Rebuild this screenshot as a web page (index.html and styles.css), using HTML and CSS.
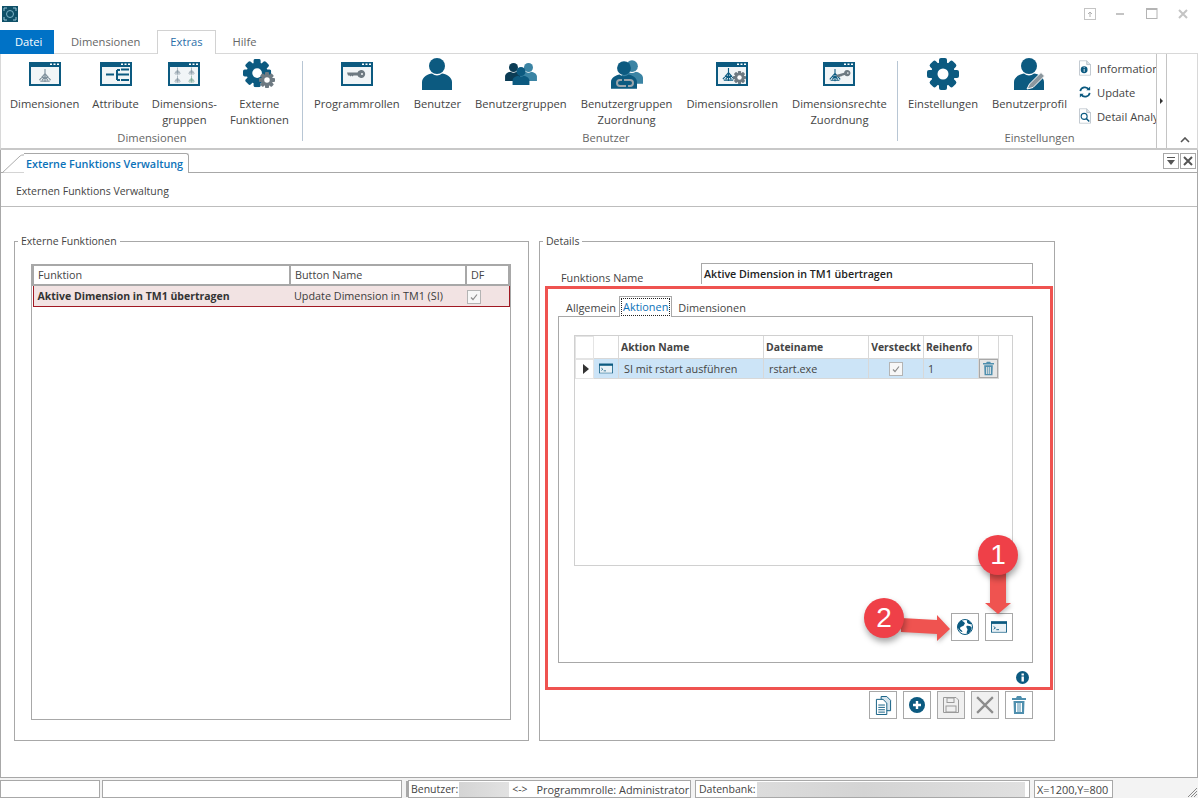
FILE: index.html
```html
<!DOCTYPE html>
<html lang="de">
<head>
  <meta charset="UTF-8">
  <title>Externe Funktions Verwaltung</title>
  <link rel="stylesheet" href="styles.css">
</head>
<body>
<svg class="sprite" xmlns="http://www.w3.org/2000/svg">
  <symbol id="frame" viewBox="0 0 32 24">
    <rect width="32" height="24" fill="#0c5a80"/>
    <rect x="2" y="5" width="28" height="17" fill="#f1f5f7"/>
    <path d="M21 1.5h2V3h-2zM24.5 1.5h2V3h-2zM28 1.5h2V3h-2z" fill="#fff"/>
  </symbol>
  <symbol id="gear" viewBox="0 0 32 32">
    <g fill="currentColor">
      <rect x="12" y="0" width="8" height="32" rx="2"/>
      <rect x="12" y="0" width="8" height="32" rx="2" transform="rotate(45 16 16)"/>
      <rect x="12" y="0" width="8" height="32" rx="2" transform="rotate(90 16 16)"/>
      <rect x="12" y="0" width="8" height="32" rx="2" transform="rotate(135 16 16)"/>
      <circle cx="16" cy="16" r="12"/>
    </g>
    <circle cx="16" cy="16" r="5.5" fill="#fff"/>
  </symbol>
  <symbol id="person" viewBox="0 0 30 32">
    <circle cx="15" cy="8" r="8" fill="currentColor"/>
    <path d="M0 32V24C0 19 6 16 10 15.5 13 18 17 18 20 15.5 24 16 30 19 30 24V32Z" fill="currentColor"/>
  </symbol>
  <symbol id="tower" viewBox="0 0 14 16">
    <path d="M7 1V15M7 6L1 13M7 6L13 13M3 10H11M2 14H12M4 13L7 9L10 13" fill="none" stroke="currentColor" stroke-width="1.2"/>
  </symbol>
  <symbol id="key" viewBox="0 0 20 8">
    <path fill-rule="evenodd" d="M0 2.5H10.5A4 4 0 1 1 10.5 5.5H6.5L5.5 6.5 4.5 5.5 3.5 6.5 2.5 5.5H1ZM15 3A1 1 0 1 0 15 5 1 1 0 1 0 15 3Z" fill="currentColor"/>
  </symbol>
  <symbol id="terminal" viewBox="0 0 18 13">
    <rect x=".5" y=".5" width="17" height="12" fill="#e9f1f6" stroke="#0c5a80"/>
    <rect width="18" height="3" fill="#0c5a80"/>
    <path d="M3 6l2 1.5L3 9M6 9.5h3" fill="none" stroke="#0c5a80"/>
  </symbol>
  <symbol id="trash" viewBox="0 0 14 18">
    <path d="M5 0h4l1 2h4v2H0V2h4zM1.5 5h11L12 18H2zM4 7v9h1.500V7zM6.500 7v9h1V7zM8.500 7v9H10V7z" fill-rule="evenodd" fill="currentColor"/>
  </symbol>
  <symbol id="page" viewBox="0 0 14 18">
    <path d="M.5.5H9L13.500 5v12.500H.5z" fill="#fff" stroke="#b4bec6"/>
    <path d="M9 .5V5h4.500" fill="#dfe5e9" stroke="#b4bec6"/>
  </symbol>
</svg>

<div class="app">
  <header class="titlebar">
    <svg class="app-logo" viewBox="0 0 16 16">
      <rect width="16" height="16" fill="#0f5068"/>
      <circle cx="8" cy="8" r="3.5" fill="none" stroke="#7fb4c8"/>
      <path d="M2 5V2H5M11 2H14V5M14 11V14H11M5 14H2V11" fill="none" stroke="#9cc6d6"/>
    </svg>
    <div class="win-buttons">
      <svg class="win-btn" viewBox="0 0 12 12"><rect x=".5" y=".5" width="11" height="11" fill="none" stroke="#c4c4c4"/><path d="M6 9V4M4 6l2-2 2 2" fill="none" stroke="#b0b0b0"/></svg>
      <svg class="win-btn" viewBox="0 0 12 12"><rect x="1" y="5" width="8" height="2" fill="#c4c4c4"/></svg>
      <svg class="win-btn" viewBox="0 0 12 12"><rect x=".5" y=".5" width="10.5" height="10" fill="none" stroke="#b4b4b4"/><rect width="11" height="2" fill="#b4b4b4"/></svg>
      <svg class="win-btn" viewBox="0 0 12 12"><path d="M2 2l8 8M10 2l-8 8" stroke="#c4c4c4" stroke-width="2"/></svg>
    </div>
  </header>

  <nav class="ribbon-tabs">
    <a class="rtab rtab-file">Datei</a>
    <a class="rtab">Dimensionen</a>
    <a class="rtab active">Extras</a>
    <a class="rtab">Hilfe</a>
  </nav>

  <section class="ribbon">
    <div class="rgroup rgroup-dim">
      <div class="ritems">
        <div class="ritem"><svg class="ico" viewBox="0 0 32 32"><use href="#frame" width="32" height="24" y="4"/><use href="#tower" x="9" y="10" width="14" height="15" color="#7f909c"/></svg><span>Dimensionen</span></div>
        <div class="ritem"><svg class="ico" viewBox="0 0 32 32"><use href="#frame" width="32" height="24" y="4"/><path d="M6 16.5H14M17 12V22M17 16.5H29M17 12H20M17 22H20M21 11.5H29M21 22H29" fill="none" stroke="#0c5a80" stroke-width="2"/></svg><span>Attribute</span></div>
        <div class="ritem"><svg class="ico" viewBox="0 0 32 32"><use href="#frame" width="32" height="24" y="4"/><use href="#tower" x="4" y="9" width="11" height="8" color="#7d8e9a"/><use href="#tower" x="18" y="9" width="11" height="8" color="#7d8e9a"/><use href="#tower" x="4" y="17" width="11" height="8" color="#7d8e9a"/><use href="#tower" x="18" y="17" width="11" height="8" color="#6fa08c"/></svg><span>Dimensions-<br>gruppen</span></div>
        <div class="ritem"><svg class="ico" viewBox="0 0 34 32"><use href="#gear" width="30" height="30" color="#0c5a80"/><use href="#gear" x="17" y="14" width="17" height="17" color="#6e7a82"/></svg><span>Externe<br>Funktionen</span></div>
      </div>
      <div class="rgroup-title">Dimensionen</div>
    </div>

    <div class="rgroup rgroup-user">
      <div class="ritems">
        <div class="ritem"><svg class="ico" viewBox="0 0 32 32"><use href="#frame" width="32" height="24" y="4"/><use href="#key" x="6" y="12" width="20" height="8" color="#6e7a82"/></svg><span>Programmrollen</span></div>
        <div class="ritem"><svg class="ico" viewBox="0 0 30 32"><use href="#person" width="30" height="32" color="#0c5a80"/></svg><span>Benutzer</span></div>
        <div class="ritem"><svg class="ico" viewBox="0 0 32 32"><use href="#person" y="5" width="17" height="18" color="#0b3c55"/><use href="#person" x="15" y="5" width="17" height="18" color="#3b84a4"/><use href="#person" x="6" y="9" width="20" height="18" color="#0c5a80"/></svg><span>Benutzergruppen</span></div>
        <div class="ritem"><svg class="ico" viewBox="0 0 32 32"><use href="#person" x="10" width="22" height="28" color="#3b84a4"/><use href="#person" y="3" width="26" height="28" color="#0c5a80"/><path d="M13 22h6a3 3 0 0 1 0 6h-2M15 28H9a3 3 0 0 1 0-6h2" fill="none" stroke="#9aa5ac" stroke-width="2"/></svg><span>Benutzergruppen<br>Zuordnung</span></div>
        <div class="ritem"><svg class="ico" viewBox="0 0 32 32"><use href="#frame" width="32" height="24" y="4"/><use href="#tower" x="5" y="9" width="15" height="15" color="#0c5a80"/><use href="#gear" x="17" y="13" width="13" height="13" color="#6e7a82"/></svg><span>Dimensionsrollen</span></div>
        <div class="ritem"><svg class="ico" viewBox="0 0 32 32"><use href="#frame" width="32" height="24" y="4"/><use href="#tower" x="5" y="10" width="14" height="14" color="#0c5a80"/><use href="#key" x="13" y="12" width="16" height="8" color="#6e7a82" transform="rotate(-15 21 16)"/></svg><span>Dimensionsrechte<br>Zuordnung</span></div>
      </div>
      <div class="rgroup-title">Benutzer</div>
    </div>

    <div class="rgroup rgroup-set">
      <div class="ritems">
        <div class="ritem"><svg class="ico" viewBox="0 0 32 32"><use href="#gear" width="32" height="32" color="#0c5a80"/></svg><span>Einstellungen</span></div>
        <div class="ritem"><svg class="ico" viewBox="0 0 32 32"><use href="#person" width="30" height="32" color="#0c5a80"/><path d="M13 31L15.5 26 27 14.500 30.500 18 19 29.500Z" fill="#8c979e" stroke="#fff"/></svg><span>Benutzerprofil</span></div>
        <ul class="rsmall">
          <li><svg class="ico-sm" viewBox="0 0 14 18"><use href="#page" width="14" height="18"/><circle cx="6" cy="11" r="4" fill="#0c5a80"/><rect x="5.5" y="10" width="1" height="3.5" fill="#fff"/><rect x="5.5" y="8" width="1" height="1" fill="#fff"/></svg>Information</li>
          <li><svg class="ico-sm" viewBox="0 0 14 18"><path d="M1.5 8a5.500 5.500 0 0 1 10-2M12.500 10a5.500 5.500 0 0 1-10 2" fill="none" stroke="#0c5a80" stroke-width="2"/><path d="M13 2.500V7H8.500zM1 15.500V11h4.500z" fill="#0c5a80"/></svg>Update</li>
          <li><svg class="ico-sm" viewBox="0 0 14 18"><use href="#page" width="14" height="18"/><circle cx="6" cy="9.500" r="3.500" fill="#fff" stroke="#0c5a80" stroke-width="1.300"/><path d="M8.500 12l3.500 3.500" stroke="#0c5a80" stroke-width="1.800"/></svg>Detail Analyse</li>
        </ul>
      </div>
      <div class="rgroup-title">Einstellungen</div>
    </div>

    <div class="rscroll"><i class="tri-right"></i></div>
    <div class="rcollapse"><svg viewBox="0 0 10 6" width="10" height="6"><path d="M1 5l4-4 4 4" fill="none" stroke="#555" stroke-width="1.600"/></svg></div>
  </section>

  <main class="doc">
    <div class="doc-tabs">
      <svg class="doc-tab-slant" viewBox="0 0 22 19" width="21" height="19"><path d="M0 19L18 1.500Q19 .5 22 .5V19Z" fill="#fff"/><path d="M0 18.500L18 1.500Q19 .5 22 .5" fill="none" stroke="#a8a8a8"/></svg>
      <div class="doc-tab">Externe Funktions Verwaltung</div>
      <div class="doc-btns">
        <span class="doc-btn"><svg viewBox="0 0 10 8" width="10" height="8"><path d="M1 .5h8" stroke="#555"/><path d="M1 3h8L5 8z" fill="#555"/></svg></span>
        <span class="doc-btn"><svg viewBox="0 0 10 10" width="10" height="10"><path d="M1 1l8 8M9 1l-8 8" stroke="#555" stroke-width="2"/></svg></span>
      </div>
    </div>
    <div class="doc-head">Externen Funktions Verwaltung</div>

    <div class="doc-body">
      <fieldset class="group group-left">
        <legend>Externe Funktionen</legend>
        <div class="fn-list">
          <table class="fn-table">
            <colgroup><col class="c-fn"><col class="c-btn"><col class="c-df"></colgroup>
            <thead><tr><th>Funktion</th><th>Button Name</th><th>DF</th></tr></thead>
            <tbody>
              <tr class="sel">
                <td><b>Aktive Dimension in TM1 übertragen</b></td>
                <td>Update Dimension in TM1 (SI)</td>
                <td><span class="check"><svg viewBox="0 0 12 12" width="12" height="12"><path d="M3 6.500l2 2 4-5" fill="none" stroke="#8c8c8c" stroke-width="1.200"/></svg></span></td>
              </tr>
            </tbody>
          </table>
        </div>
      </fieldset>

      <fieldset class="group group-right">
        <legend>Details</legend>
        <div class="name-row">
          <label>Funktions Name</label>
          <div class="name-input">Aktive Dimension in TM1 übertragen</div>
        </div>
        <div class="tabs">
          <span class="tab">Allgemein</span>
          <span class="tab active"><em>Aktionen</em></span>
          <span class="tab">Dimensionen</span>
        </div>
        <div class="tab-panel">
          <div class="act-grid">
            <div class="act-row act-header">
              <div class="cell c-arrow"></div>
              <div class="cell c-icon"></div>
              <div class="cell c-name">Aktion Name</div>
              <div class="cell c-file">Dateiname</div>
              <div class="cell c-hidden">Versteckt</div>
              <div class="cell c-order">Reihenfo</div>
              <div class="cell c-del"></div>
            </div>
            <div class="act-row act-sel">
              <div class="cell c-arrow"><i class="tri-right tri-big"></i></div>
              <div class="cell c-icon"><svg viewBox="0 0 18 13" width="14" height="11"><use href="#terminal" width="18" height="13"/></svg></div>
              <div class="cell c-name">SI mit rstart ausführen</div>
              <div class="cell c-file">rstart.exe</div>
              <div class="cell c-hidden"><span class="check"><svg viewBox="0 0 12 12" width="12" height="12"><path d="M3 6.500l2 2 4-5" fill="none" stroke="#8c8c8c" stroke-width="1.200"/></svg></span></div>
              <div class="cell c-order">1</div>
              <div class="cell c-del"><span class="del-btn"><svg viewBox="0 0 14 18" width="11" height="15"><use href="#trash" width="14" height="18" color="#4f8fae"/></svg></span></div>
            </div>
          </div>
          <div class="panel-btns">
            <span class="btn"><svg viewBox="0 0 16 16" width="16" height="16"><circle cx="8" cy="8" r="7.500" fill="#fff" stroke="#0c5a80"/><path d="M4 1.500C6 2 7.500 3 8 4.500 7 5 7.500 6.500 6 7 4.500 7.500 3 8 3 9.500 3.500 11 5 11 5.500 13 4 13 1.500 11 .5 8 .5 5 2 3 4 1.500ZM9.500 7C11 6.500 13 7 14.500 8 15 10.500 13 14 10 15 9 13 10.500 12 10.500 10.500 10 9 9 8.500 9.500 7ZM10 1C12 1.500 13.500 3 14.500 5 13 5.500 11 5 10 3.500Z" fill="#0c5a80"/></svg></span>
            <span class="btn"><svg viewBox="0 0 18 13" width="16" height="12"><use href="#terminal" width="18" height="13"/></svg></span>
          </div>
        </div>
        <div class="info-row"><svg viewBox="0 0 13 13" width="13" height="13"><circle cx="6.500" cy="6.500" r="6.500" fill="#0c5a80"/><rect x="5.500" y="5.500" width="2.400" height="5" fill="#fff"/><rect x="5.500" y="2.500" width="2.400" height="2" fill="#fff"/></svg></div>
        <div class="form-btns">
          <span class="btn"><svg viewBox="0 0 18 20" width="17" height="19"><path d="M6.500 .5h6l4 4v11h-10z" fill="#d8e6ee" stroke="#0c5a80"/><path d="M1.500 3.500h7l4 4v12h-11z" fill="#fff" stroke="#0c5a80"/><path d="M3.500 9.500h7M3.500 12h7M3.500 14.500h7M3.500 17h7" stroke="#0c5a80"/></svg></span>
          <span class="btn"><svg viewBox="0 0 16 16" width="16" height="16"><circle cx="8" cy="8" r="8" fill="#0c5a80"/><path d="M8 4v8M4 8h8" stroke="#fff" stroke-width="2.400"/></svg></span>
          <span class="btn btn-off"><svg viewBox="0 0 16 16" width="16" height="16"><path d="M.5.5H13l2.500 2.500v12.500H.5z" fill="none" stroke="#9a9a9a"/><rect x="4" y="1" width="7" height="4.500" fill="none" stroke="#9a9a9a"/><rect x="3" y="9" width="10" height="6" fill="none" stroke="#9a9a9a"/></svg></span>
          <span class="btn btn-off"><svg viewBox="0 0 16 16" width="18" height="18"><path d="M1 1l14 14M15 1L1 15" stroke="#8c8c8c" stroke-width="2"/></svg></span>
          <span class="btn"><svg viewBox="0 0 14 18" width="14" height="18"><use href="#trash" width="14" height="18" color="#4f8fae"/></svg></span>
        </div>
      </fieldset>
    </div>
  </main>

  <footer class="statusbar">
    <div class="sb sb-a"></div>
    <div class="sb sb-b"></div>
    <div class="sb sb-user">Benutzer:<span class="blur blur-user"></span><span class="sb-link">&lt;-&gt;</span><span class="sb-role">Programmrolle: Administrator</span></div>
    <div class="sb sb-db">Datenbank:<span class="blur blur-db"></span></div>
    <div class="sb sb-xy">X=1200,Y=800</div>
    <svg class="grip" viewBox="0 0 10 10" width="10" height="10"><path d="M10 1L1 10M10 4L4 10M10 7L7 10" stroke="#888"/></svg>
  </footer>

  <!-- markup drawn on top of the screenshot -->
  <div class="mark-box"></div>
  <svg class="mark-arrow arrow-1" viewBox="0 0 26 45" width="26" height="45"><path d="M5 0H21V34H26L13 45 0 34H5Z" fill="#ef5350"/></svg>
  <svg class="mark-arrow arrow-2" viewBox="0 0 50 26" width="50" height="26"><path d="M0 3L36 5V0L49 14 36 26V19L0 17Z" fill="#ef5350"/></svg>
  <div class="badge badge-1">1</div>
  <div class="badge badge-2">2</div>
</div>
</body>
</html>
```
FILE: styles.css
```css
* { box-sizing:border-box; }
html, body { margin:0; padding:0; }
body { font-family:"Open Sans", "Noto Sans", sans-serif; font-size:11px; color:#3c3c3c; background:#fff; }
.sprite { position:absolute; width:0; height:0; }
.app { position:relative; width:1198px; height:798px; display:flex; flex-direction:column; overflow:hidden; background:#fff; }

/* Title bar */
.titlebar { height:30px; flex:none; display:flex; align-items:center; justify-content:space-between; padding:0 0 0 2px; }
.app-logo { width:16px; height:16px; margin-top:-2px; }
.win-buttons { display:flex; align-items:center; gap:19px; padding-right:9px; margin-top:-2px; }
.win-btn { width:12px; height:12px; }

/* Ribbon */
.ribbon-tabs { height:24px; flex:none; display:flex; align-items:stretch; position:relative; z-index:1; }
.rtab { padding:2px 16px 0; font-size:11.2px; color:#666; border:1px solid transparent; border-bottom:none; line-height:18px; }
.rtab-file { background:#0072c6; color:#fff; padding:2px 14px 0; width:54px; }
.rtab.active { background:#fff; border-color:#d2d2d2; color:#2a6ea8; padding:2px 12px 0; }
.ribbon { height:97px; flex:none; margin-top:-1px; display:flex; border:1px solid #d8d8d8; border-bottom:2px solid #c8c8c8; position:relative; }
.rgroup { display:flex; flex-direction:column; height:100%; position:relative; }
.rgroup-dim { width:302px; padding:0 9px; }
.rgroup-dim .ritems { gap:13px; }
.rgroup-user { width:595px; padding-left:11px; }
.rgroup-set { width:259px; padding-left:10px; }
.rgroup-dim::after, .rgroup-user::after { content:''; position:absolute; right:0; top:7px; height:80px; width:1px; background:#b8c6d4; }
.ritems { display:flex; gap:14px; height:80px; }
.ritem { display:flex; flex-direction:column; align-items:center; text-align:center; font-size:11.2px; line-height:16px; color:#444; padding-top:4px; white-space:nowrap; }
.ritem span { margin-top:6px; }
.ico { height:32px; width:32px; flex:none; }
.rgroup-title { text-align:center; font-size:11.2px; color:#666; line-height:16px; margin-top:-4px; }
.rgroup-set .rgroup-title { padding-left:14px; }
.rsmall { list-style:none; margin:0 0 0 -2px; padding:2px 0 0; width:77px; overflow:hidden; white-space:nowrap; }
.rsmall li { height:24px; display:flex; align-items:center; gap:6px; font-size:11.2px; color:#444; }
.ico-sm { width:12px; height:16px; flex:none; }
.rscroll { position:absolute; left:1155px; top:0; bottom:0; width:11px; background:#fff; border:1px solid #c4c4c4; border-top:none; border-bottom:none; display:flex; align-items:center; justify-content:center; }
.tri-right { display:block; width:0; height:0; border-left:3px solid #333; border-top:3px solid transparent; border-bottom:3px solid transparent; }
.tri-big { border-left-width:6px; border-top-width:5px; border-bottom-width:5px; }
.rcollapse { position:absolute; right:7px; bottom:2px; }

/* Document area */
.doc { flex:1; display:flex; flex-direction:column; border:1px solid #a8a8a8; border-top:none; min-height:0; }
.doc-tabs { height:23px; flex:none; display:flex; align-items:flex-end; border-bottom:1px solid #a8a8a8; position:relative; padding-left:2px; }
.doc-tab-slant { display:block; margin-bottom:-1px; }
.doc-tab { height:20px; margin-bottom:-1px; background:#fff; border:1px solid #a8a8a8; border-left:none; border-bottom:none; border-radius:0 3px 0 0; padding:1px 5px 0 2px; font-size:10.8px; font-weight:600; color:#0b72b9; line-height:18px; white-space:nowrap; }
.doc-btns { margin-left:auto; display:flex; gap:1px; padding-right:1px; align-self:center; }
.doc-btn { width:16px; height:16px; border:1px solid #a8a8a8; display:flex; align-items:center; justify-content:center; }
.doc-head { height:34px; flex:none; padding:10px 0 0 15px; line-height:16px; border-bottom:1px solid #bdbdbd; font-size:10.5px; color:#444; }
.doc-body { flex:1; display:flex; gap:10px; padding:26px 0 0 13px; }

.group { margin:0; border:1px solid #a8a8a8; padding:0; height:508px; min-width:0; display:flex; flex-direction:column; }
.group legend { padding:0 3px; font-size:10.5px; line-height:16px; color:#444; }
.group-left { width:515px; padding:15px 17px 20px 16px; }
.group-left legend { margin-left:-13px; }
.group-right { width:516px; padding:14px 21px 0 18px; }
.group-right legend { margin-left:-15px; }
.fn-list { height:456px; border:1px solid #a8a8a8; border-top:none; }
.fn-table { width:100%; border-collapse:collapse; table-layout:fixed; font-size:10.8px; }
.c-fn { width:257px; }
.c-btn { width:176px; }
.fn-table th { height:20px; padding:0 4px 2px; text-align:left; font-weight:400; border:2px solid #a8a8a8; color:#444; }
.fn-table td { height:21px; padding:0 4px; background:#f2e3e3; border-top:1px solid #a01822; border-bottom:1px solid #a01822; white-space:nowrap; }
.fn-table td:first-child { border-left:1px solid #a01822; }
.fn-table td:last-child { border-right:1px solid #a01822; padding-left:1px; }
.fn-table b { font-weight:700; font-size:10.5px; color:#333; }
.check { display:inline-flex; width:14px; height:14px; align-items:center; justify-content:center; background:#f7f7f7; border:1px solid #b4b4b4; vertical-align:middle; }

.name-row { display:flex; align-items:flex-end; height:21px; flex:none; }
.name-row label { width:143px; font-size:10.8px; padding-left:3px; margin-bottom:-1px; color:#444; line-height:14px; }
.name-input { flex:1; height:21px; border:1px solid #a8a8a8; border-bottom:none; padding:1px 0 0 2px; font-weight:600; font-size:10.7px; line-height:18px; color:#222; }
.tabs { height:21px; margin-top:12px; display:flex; flex:none; padding-left:5px; align-items:flex-end; position:relative; z-index:1; margin-bottom:-1px; }
.tab { padding:0 3px; line-height:18px; font-size:10.9px; color:#444; }
.tab.active { height:21px; margin:0 3px 0 0; padding:1px; background:#fff; border:1px solid #a8a8a8; border-bottom:none; color:#0b72b9; }
.tab.active em { display:block; font-style:normal; line-height:18px; padding:0 2px; outline:1px dotted #222; outline-offset:-1px; }
.tab-panel { height:347px; flex:none; border:1px solid #a8a8a8; padding:18px 19px 0 15px; display:flex; flex-direction:column; }
.act-grid { height:231px; flex:none; border:1px solid #d0d0d0; font-size:10.8px; }
.act-row { display:flex; }
.act-header { height:23px; font-weight:700; font-size:10.4px; color:#444; }
.act-sel { height:20px; color:#444; }
.cell { display:flex; align-items:center; border-right:1px solid #d8d8d8; border-bottom:1px solid #d8d8d8; padding-left:2px; white-space:nowrap; overflow:hidden; }
.act-sel .cell { background:#cce4f7; }
.act-sel .c-arrow { background:#fff; }
.act-sel .c-name { padding-left:5px; }
.act-sel .c-file { padding-left:5px; }
.c-arrow { width:19px; padding-left:7px; border:1px solid #e4e4e4; }
.c-icon { width:25px; justify-content:center; padding:0; }
.c-name { width:145px; }
.c-file { width:105px; }
.c-hidden { width:55px; justify-content:center; padding:0; }
.c-order { width:55px; }
.c-del { width:20px; padding:0; justify-content:center; }
.act-sel .c-order { padding-left:4px; }
.del-btn { width:19px; height:19px; display:flex; align-items:center; justify-content:center; background:#e6e6e6; border:1px solid #a8a8a8; }
.panel-btns { display:flex; justify-content:flex-end; gap:6px; margin-top:47px; }
.btn { width:28px; height:28px; display:flex; align-items:center; justify-content:center; background:#fff; border:1px solid #a8a8a8; }
.btn-off { background:#f0f0f0; }
.info-row { height:14px; margin-top:8px; display:flex; justify-content:flex-end; padding-right:4px; flex:none; }
.form-btns { display:flex; justify-content:flex-end; gap:6px; margin-top:6px; }

/* Status bar */
.statusbar { height:20px; flex:none; display:flex; align-items:stretch; background:#f3f3f3; padding-top:2px; position:relative; font-size:10.5px; color:#444; }
.sb { background:#fff; border:1px solid #a8a8a8; display:flex; align-items:center; padding-left:2px; white-space:nowrap; overflow:hidden; }
.sb-a { width:100px; }
.sb-b { width:300px; margin-left:2px; }
.sb-user { width:283px; margin-left:6px; box-shadow:-3px 0 0 -1px #a8a8a8; }
.sb-role { font-size:10.9px; }
.sb-db { width:335px; margin-left:4px; padding-left:3px; }
.sb-xy { width:79px; margin-left:4px; font-size:10.9px; }
.blur { display:block; height:15px; background:linear-gradient(90deg,#d4d4d4,#e2e2e2); }
.blur-user { width:50px; margin-left:1px; }
.blur-db { width:268px; margin-left:1px; background:linear-gradient(90deg,#dcdcdc,#d4d4d4 40%,#e0e0e0); }
.sb-link { margin:0 9px 0 3px; }
.grip { position:absolute; right:1px; bottom:1px; }

/* Red annotations */
.mark-box { position:absolute; left:545px; top:286px; width:508px; height:404px; border:3px solid #ef5350; pointer-events:none; }
.badge { position:absolute; width:40px; height:40px; border-radius:50%; background:#ef4048; color:#fff; font:28px/40px "Liberation Sans", sans-serif; text-align:center; box-shadow:1px 4px 6px rgba(0,0,0,.35); }
.badge-1 { left:978px; top:535px; }
.badge-2 { left:864px; top:598px; }
.mark-arrow { position:absolute; filter:drop-shadow(1px 2px 2px rgba(0,0,0,.25)); }
.arrow-1 { left:985px; top:569px; }
.arrow-2 { left:901px; top:615px; }
```
